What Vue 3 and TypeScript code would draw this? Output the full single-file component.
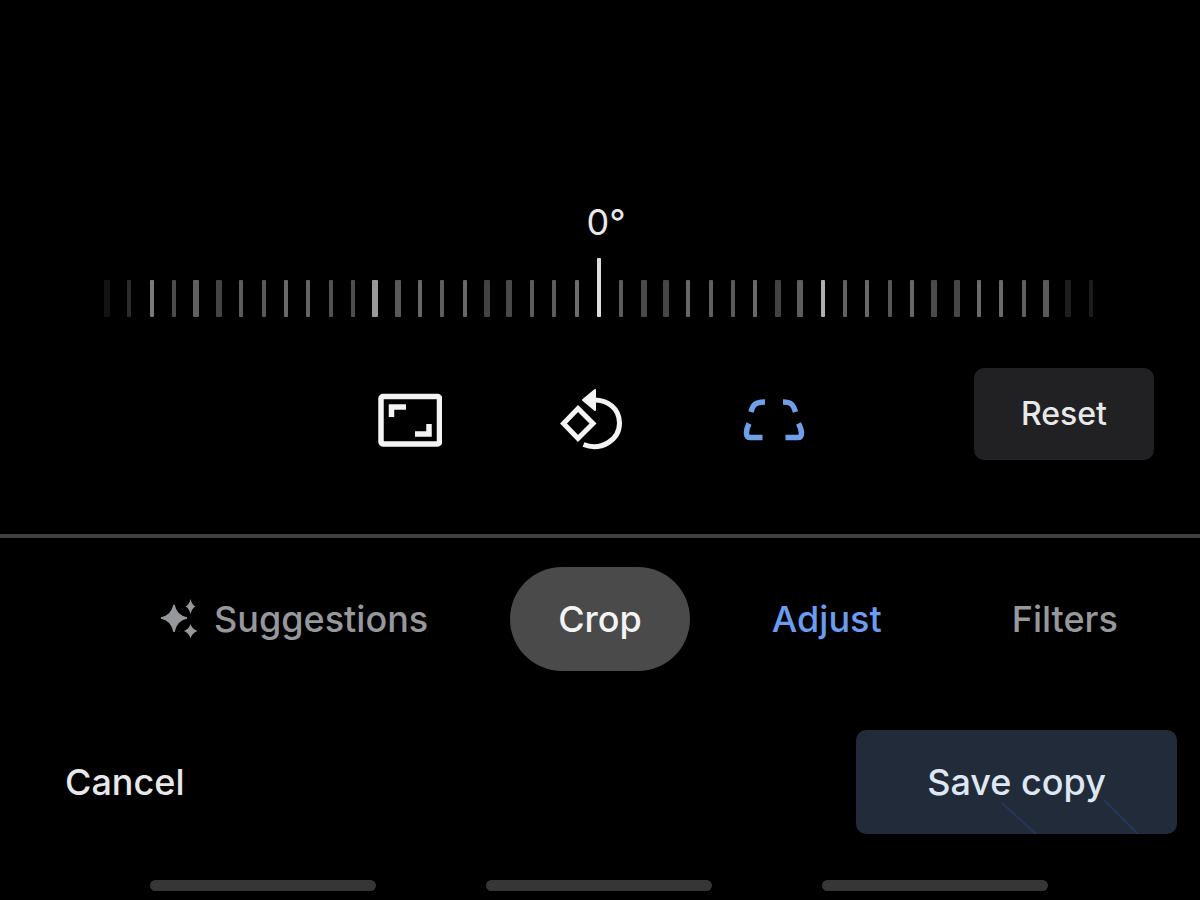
<script setup lang="ts">
import { ref } from 'vue'

interface Tick {
  shade: string
  size: 'thin' | 'wide'
}

const shades: string[] = [
  '#131313', '#2c2c2c', '#7a7a7a', '#4c4c4c', '#606060', '#444446', '#5c5c5c', '#5a5a5a', '#686868',
  '#646464', '#525252', '#4e4e4e', '#9a9898', '#585858', '#686868', '#5e5e5e', '#686868', '#424244',
  '#484848', '#5c5c5c', '#5c5c5c', '#6c6c6c', '#dedede', '#5c5c5c', '#4a4a4a', '#464646', '#686868',
  '#606060', '#5a5a5a', '#686868', '#424242', '#5e5e5e', '#b0b0b0', '#606060', '#686868', '#565656',
  '#686868', '#4a4a4a', '#464646', '#6a6a6a', '#6a6a6a', '#606060', '#5a5a5a', '#1e1e1e', '#1c1c1c',
]
const wide = [0, 4, 5, 12, 13, 17, 18, 24, 25, 30, 31, 37, 38, 42, 43]

const ticks: Tick[] = shades.map((shade, i) => ({
  shade,
  size: wide.includes(i) ? 'wide' : 'thin',
}))
const middle = 22

const angle = ref(0)
const tabs = ['Suggestions', 'Crop', 'Adjust', 'Filters']
const current = ref('Crop')
</script>

<template>
  <main class="editor">
    <section class="straighten">
      <output class="angle" for="angle">{{ angle }}°</output>
      <div class="ruler">
        <span
          v-for="(tick, i) in ticks"
          :key="i"
          class="tick"
          :class="[tick.size, { middle: i === middle }]"
          :style="{ backgroundColor: tick.shade }"
        ></span>
        <input id="angle" v-model.number="angle" class="slider" type="range" min="-45" max="45" aria-label="Straighten" />
      </div>
    </section>

    <section class="tools">
      <div class="tool-group">
        <button class="tool" type="button" aria-label="Aspect ratio">
          <svg viewBox="0 0 64 64" fill="none" stroke="#f4f4f4">
            <rect x="3" y="8.500" width="58.500" height="47.500" rx="2" stroke-width="5.500" />
            <path d="M13.500 29V19H28M51 36V46H37" stroke-width="5.500" />
          </svg>
        </button>
        <button class="tool" type="button" aria-label="Rotate">
          <svg viewBox="0 0 64 64" fill="none" stroke="#f4f4f4" stroke-width="5">
            <path d="M18 20.500L33 35.500L18 50.500L3.500 35.500Z" />
            <path d="M32 12C48 11 59.500 21 59.500 35C59.500 52 41 63.500 23.500 56.500" />
            <path d="M23 12L35 2V22Z" fill="#f4f4f4" stroke-width="2" stroke-linejoin="round" />
          </svg>
        </button>
        <button class="tool" type="button" aria-label="Perspective">
          <svg viewBox="0 0 64 64" fill="none" stroke="#6f9fe8" stroke-width="5.500">
            <path d="M9 24C11 16 14 14 23 14M41 14C49 14 51 16 53.500 24" />
            <path d="M7 35.500C3 44 4 49.500 8 49.500H20.500M56.500 35.500C61 44 60 49.500 56 49.500H43.500" />
          </svg>
        </button>
      </div>
      <button class="reset" type="button" @click="angle = 0">Reset</button>
    </section>

    <nav class="tabs">
      <button
        v-for="tab in tabs"
        :key="tab"
        class="tab"
        type="button"
        :class="{ selected: tab === current, accent: tab === 'Adjust' }"
        @click="current = tab"
      >
        <svg v-if="tab === 'Suggestions'" class="sparkle" viewBox="0 0 38 40" fill="currentColor">
          <path d="M14 6Q16 17 27 19Q16 21 14 33Q12 21 1 19Q12 17 14 6Z" stroke="currentColor" stroke-width="1.500" />
          <path d="M30.500 0Q32 6 35.500 7.500Q32 9 30.500 15Q29 9 25.500 7.500Q29 6 30.500 0Z" />
          <path d="M30.500 25Q32 30 37.500 32Q32 34 30.500 39.500Q29 34 24 32Q29 30 30.500 25Z" />
        </svg>
        {{ tab }}
      </button>
    </nav>

    <footer class="actions">
      <button class="cancel" type="button">Cancel</button>
      <button class="save" type="button">
        <svg class="streaks" viewBox="0 0 321 104" fill="none" stroke="#24375a" stroke-width="2">
          <path d="M146 73L180 104M248 70L282 104" />
        </svg>
        <span class="save-text">Save copy</span>
      </button>
    </footer>

    <div class="handles">
      <span class="handle"></span>
      <span class="handle"></span>
      <span class="handle"></span>
    </div>
  </main>
</template>

<style>
body {
  margin: 0;
  background: #000;
}
</style>

<style scoped>
.editor {
  box-sizing: border-box;
  min-height: 100vh;
  padding-top: 200px;
  display: flex;
  flex-direction: column;
  background: #000;
  color: #e8e8e8;
  font-family: Inter, "Open Sans", sans-serif;
  font-size: 36px;
  line-height: 44px;
}

button {
  border: 0;
  padding: 0;
  background: none;
  color: inherit;
  font: inherit;
  font-weight: 500;
  cursor: pointer;
}

.straighten {
  display: flex;
  flex-direction: column;
  gap: 14px;
}

.angle {
  padding-left: 12px;
  text-align: center;
}

.ruler {
  position: relative;
  display: flex;
  justify-content: space-between;
  align-items: flex-end;
  height: 59px;
  padding: 0 106px 0 104px;
}

.tick {
  height: 37px;
  border-radius: 1px;
}

.thin {
  width: 4px;
  margin: 0 1px;
}

.wide {
  width: 6px;
}

.middle {
  height: 59px;
}

.slider {
  position: absolute;
  inset: 0;
  width: 100%;
  height: 100%;
  margin: 0;
  opacity: 0;
}

.tools {
  display: flex;
  align-items: flex-start;
  justify-content: space-between;
  margin-top: 51px;
  padding: 0 46px 0 31.5%;
}

.tool-group {
  display: flex;
  gap: 118px;
  padding-top: 20px;
}

.tool {
  width: 64px;
  height: 64px;
}

.tool svg {
  display: block;
  width: 100%;
  height: 100%;
}

.reset {
  width: 180px;
  height: 92px;
  border-radius: 10px;
  background: #212123;
  font-size: 32px;
}

.tabs {
  display: flex;
  gap: 34px;
  margin-top: 74px;
  padding: 29px 0 0 112px;
  border-top: 4px solid #404042;
}

.tab {
  display: flex;
  align-items: center;
  height: 104px;
  padding: 0 48px;
  border-radius: 52px;
  color: #96989c;
  white-space: nowrap;
}

.selected {
  background: #4a4a4a;
  color: #f4f4f4;
}

.accent {
  color: #6a9df2;
}

.sparkle {
  width: 38px;
  height: 40px;
  margin-right: 16px;
}

.actions {
  display: flex;
  align-items: center;
  justify-content: space-between;
  margin-top: 59px;
  padding: 0 23px 0 65px;
}

.save {
  position: relative;
  width: 321px;
  height: 104px;
  border-radius: 10px;
  background: #222b39;
  color: #dfe7f3;
}

.streaks {
  position: absolute;
  inset: 0;
  width: 100%;
  height: 100%;
}

.save-text {
  position: relative;
}

.handles {
  display: flex;
  gap: 110px;
  margin-top: 46px;
  padding: 0 152px 9px 150px;
}

.handle {
  flex: 1;
  height: 11px;
  border-radius: 6px;
  background: #363636;
}
</style>
